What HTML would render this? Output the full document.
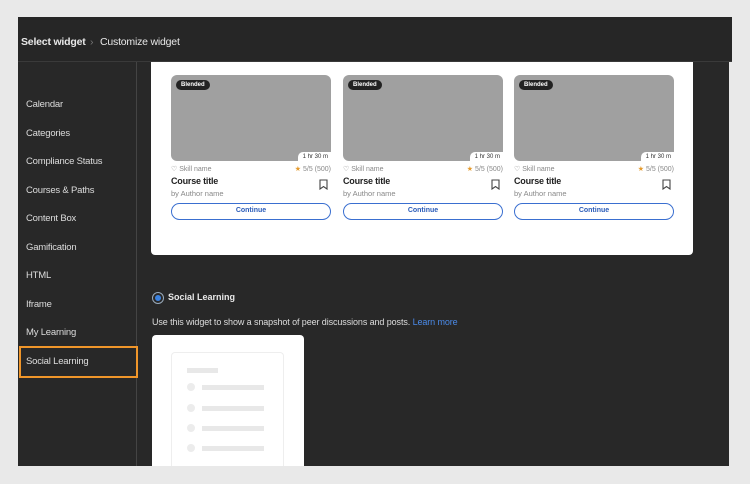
<!DOCTYPE html>
<html><head><style>
*{margin:0;padding:0;box-sizing:border-box}
body{width:750px;height:484px;background:#e9e9e9;font-family:"Liberation Sans",sans-serif;position:relative;overflow:hidden}
.abs{position:absolute}
#hdr{left:18px;top:17px;width:714px;height:45px;background:#262626;border-bottom:1px solid #3a3a3a}
#hdr span{position:absolute;top:19px;font-size:10.5px;color:#e8e8e8;letter-spacing:-0.2px}
#main{left:18px;top:62px;width:711px;height:404px;background:#282828}
#side{left:18px;top:62px;width:119px;height:404px;border-right:1px solid #444}
.it{position:absolute;left:8px;font-size:9.5px;color:#ddd;letter-spacing:-0.2px}
.card{position:absolute;top:75px;width:160px}
.img{height:86px;background:#a0a0a0;border-radius:6px;position:relative}
.tag{position:absolute;left:5px;top:5px;background:#222;color:#fff;font-size:6px;font-weight:bold;padding:2px 5px;border-radius:7px}
.dur{position:absolute;right:0;bottom:0;background:#fff;font-size:6px;color:#333;padding:2px 3px 1px 5px;border-top-left-radius:5px}
.sk{font-size:7px;color:#888;margin-top:4px;display:flex;justify-content:space-between}
.ti{font-size:9px;font-weight:bold;color:#222;margin-top:3px;letter-spacing:-0.2px}
.au{font-size:7.5px;color:#888;margin-top:3px}
.btn{margin-top:5px;height:17px;border:1.5px solid #3a6fd0;border-radius:9px;text-align:center;font-size:7px;font-weight:bold;color:#2a5bb8;line-height:14px}
.bm{position:absolute;right:3px;top:104px}
.line{position:absolute;height:5px;background:#e8e8e8}
.dot{position:absolute;width:8px;height:8px;border-radius:50%;background:#ececec}
</style></head><body>
<div id="hdr" class="abs"><span style="left:3px;font-weight:bold">Select widget</span><span style="left:72px;color:#777">›</span><span style="left:82px">Customize widget</span></div>
<div id="main" class="abs"></div>
<div id="side" class="abs">
<div class="it" style="top:37px">Calendar</div>
<div class="it" style="top:66px">Categories</div>
<div class="it" style="top:94px">Compliance Status</div>
<div class="it" style="top:123px">Courses &amp; Paths</div>
<div class="it" style="top:151px">Content Box</div>
<div class="it" style="top:180px">Gamification</div>
<div class="it" style="top:208px">HTML</div>
<div class="it" style="top:237px">Iframe</div>
<div class="it" style="top:265px">My Learning</div>
<div class="abs" style="left:1px;top:284px;width:119px;height:32px;border:2px solid #f0962a"></div>
<div class="it" style="top:294px">Social Learning</div>
</div>
<div class="abs" style="left:151px;top:62px;width:542px;height:193px;background:#fff;border-radius:0 0 4px 4px"></div>
<div class="card" style="left:171px"><div class="img"><span class="tag">Blended</span><span class="dur">1 hr 30 m</span></div><div class="sk"><span>♡ Skill name</span><span><span style="color:#e59b2e">★</span> 5/5 (500)</span></div><div class="ti">Course title</div><div class="au">by Author name</div><div class="btn">Continue</div><svg class="bm" width="9" height="11" viewBox="0 0 9 11"><path d="M1 1H8V10L4.5 7.5L1 10Z" fill="none" stroke="#444" stroke-width="1.1"/></svg></div>
<div class="card" style="left:343px"><div class="img"><span class="tag">Blended</span><span class="dur">1 hr 30 m</span></div><div class="sk"><span>♡ Skill name</span><span><span style="color:#e59b2e">★</span> 5/5 (500)</span></div><div class="ti">Course title</div><div class="au">by Author name</div><div class="btn">Continue</div><svg class="bm" width="9" height="11" viewBox="0 0 9 11"><path d="M1 1H8V10L4.5 7.5L1 10Z" fill="none" stroke="#444" stroke-width="1.1"/></svg></div>
<div class="card" style="left:514px"><div class="img"><span class="tag">Blended</span><span class="dur">1 hr 30 m</span></div><div class="sk"><span>♡ Skill name</span><span><span style="color:#e59b2e">★</span> 5/5 (500)</span></div><div class="ti">Course title</div><div class="au">by Author name</div><div class="btn">Continue</div><svg class="bm" width="9" height="11" viewBox="0 0 9 11"><path d="M1 1H8V10L4.5 7.5L1 10Z" fill="none" stroke="#444" stroke-width="1.1"/></svg></div>
<div class="abs" style="left:152px;top:292px;width:12px;height:12px;border-radius:50%;border:1.5px solid #9ab;background:#282828"><div style="margin:1.5px;width:6px;height:6px;border-radius:50%;background:#3b82e0"></div></div>
<div class="abs" style="left:168px;top:292px;font-size:9px;font-weight:bold;color:#e8e8e8">Social Learning</div>
<div class="abs" style="left:152px;top:317px;font-size:9px;color:#ddd;letter-spacing:-0.1px">Use this widget to show a snapshot of peer discussions and posts. <span style="color:#4a8ae8">Learn more</span></div>
<div class="abs" style="left:152px;top:335px;width:152px;height:131px;background:#fff;border-radius:4px 4px 0 0"></div>
<div class="abs" style="left:171px;top:352px;width:113px;height:114px;border:1px solid #eee;border-bottom:none;border-radius:4px 4px 0 0"></div>
<div class="line" style="left:187px;top:368px;width:31px"></div>
<div class="dot" style="left:187px;top:383px"></div><div class="line" style="left:202px;top:385px;width:62px"></div>
<div class="dot" style="left:187px;top:404px"></div><div class="line" style="left:202px;top:406px;width:62px"></div>
<div class="dot" style="left:187px;top:424px"></div><div class="line" style="left:202px;top:426px;width:62px"></div>
<div class="dot" style="left:187px;top:444px"></div><div class="line" style="left:202px;top:446px;width:62px"></div>
</body></html>
